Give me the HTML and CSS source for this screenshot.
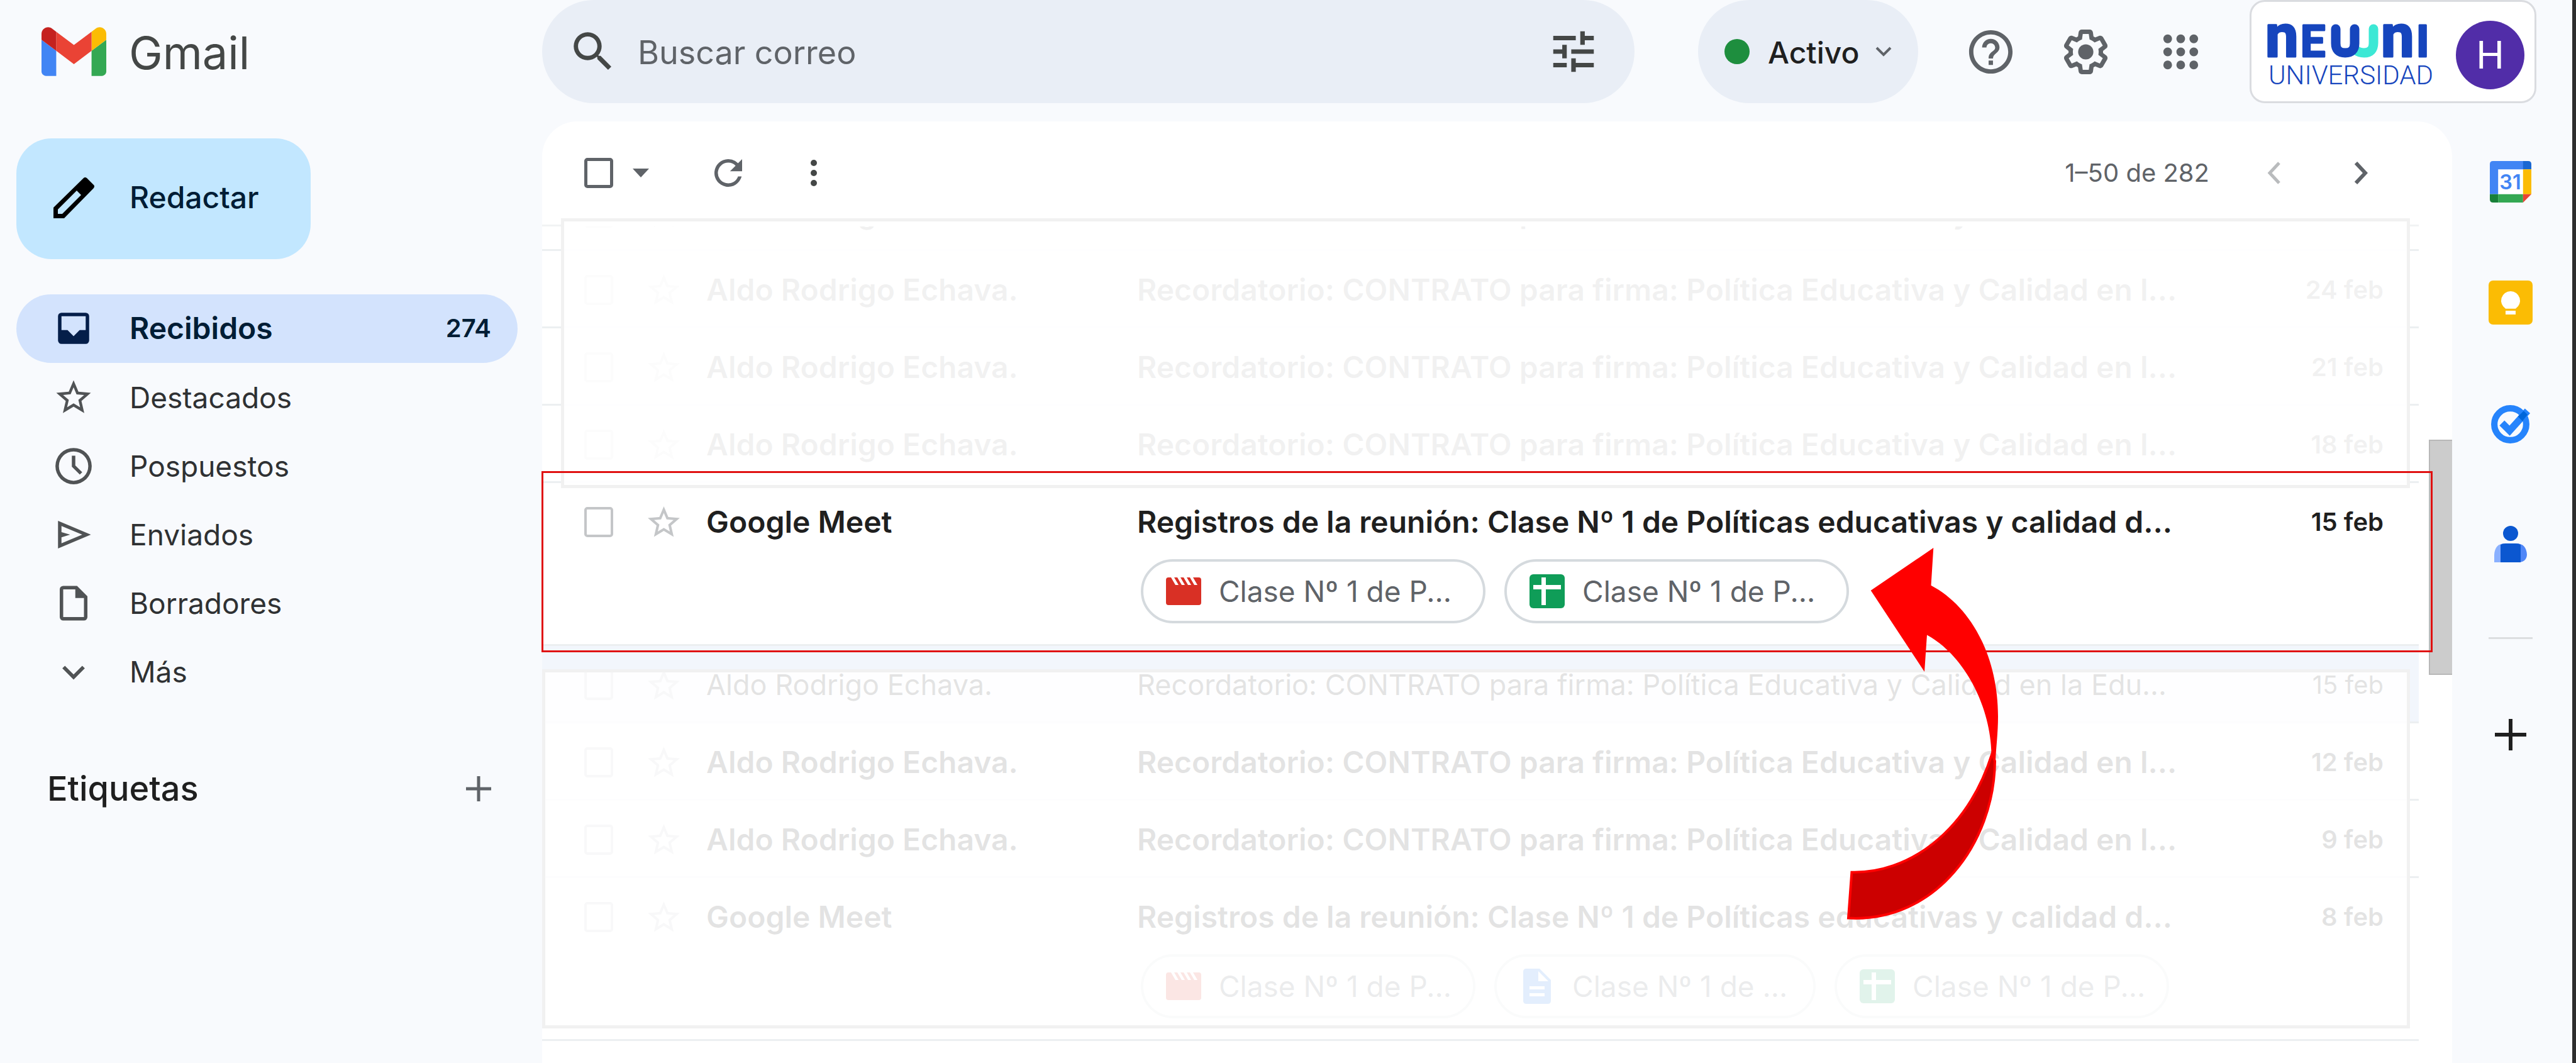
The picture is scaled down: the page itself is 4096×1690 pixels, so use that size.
FILE: index.html
```html
<!DOCTYPE html>
<html lang="es">
<head>
<meta charset="utf-8">
<title>Recibidos (274) - Gmail</title>
<link rel="stylesheet" href="styles.css">
</head>
<body>
<svg class="defs" aria-hidden="true">
  <symbol id="i-star" viewBox="0 0 24 24"><path d="M22 9.24l-7.19-.62L12 2 9.19 8.63 2 9.24l5.46 4.73L5.82 21 12 17.27 18.18 21l-1.63-7.03L22 9.24zM12 15.4l-3.76 2.27 1-4.28-3.32-2.88 4.38-.38L12 6.1l1.71 4.04 4.38.38-3.32 2.88 1 4.28L12 15.4z"/></symbol>
  <symbol id="i-clip" viewBox="0 0 56 44"><path fill="#d93025" d="M4 0h4l7 12h5L13 0h5l7 12h5L23 0h5l7 12h5L33 0h5l7 12h5L43 0h9q4 0 4 4v36q0 4-4 4H4q-4 0-4-4V4q0-4 4-4z"/></symbol>
  <symbol id="i-sheet" viewBox="0 0 56 54"><rect width="56" height="54" rx="6" fill="#0f9d58"/><path fill="#fff" d="M19 5h7v12h24v7H26v25h-7V24H6v-7h13z"/></symbol>
  <symbol id="i-doc" viewBox="0 0 44 56"><path fill="#1a73e8" d="M5 0h21l18 18v33q0 5-5 5H5q-5 0-5-5V5q0-5 5-5z"/><path fill="#fff" d="M24 4v16h16zM10 28h24v5H10zM10 39h24v5H10z"/></symbol>
</svg>

<header class="top">
  <a class="brand" href="#">
    <svg class="brand-logo" viewBox="52 42 88 66" aria-hidden="true"><path fill="#4285f4" d="M58 108h14V74L52 59v43c0 3.320 2.690 6 6 6"/><path fill="#34a853" d="M120 108h14c3.320 0 6-2.690 6-6V59l-20 15"/><path fill="#fbbc04" d="M120 48v26l20-15v-8c0-7.420-8.470-11.650-14.400-7.200"/><path fill="#ea4335" d="M72 74V48l24 18 24-18v26L96 92"/><path fill="#c5221f" d="M52 51v8l20 15V48l-5.600-4.200c-5.940-4.450-14.400-.22-14.400 7.200"/></svg>
    <span>Gmail</span>
  </a>
  <form class="search">
    <button type="button" class="ghost" aria-label="Buscar"><svg class="ico-search" viewBox="0 0 24 24"><path d="M15.500 14h-.79l-.28-.27A6.470 6.470 0 0 0 16 9.500 6.500 6.500 0 1 0 9.500 16c1.610 0 3.090-.59 4.230-1.570l.27.28v.79l5 4.990L20.490 19l-4.990-5zm-6 0C7.010 14 5 11.990 5 9.500S7.010 5 9.500 5 14 7.010 14 9.500 11.990 14 9.500 14z"/></svg></button>
    <input type="text" placeholder="Buscar correo" aria-label="Buscar correo">
    <button type="button" class="ghost" aria-label="Opciones de búsqueda"><svg class="ico-tune" viewBox="0 0 24 24"><path d="M3 17v2h6v-2H3zM3 5v2h10V5H3zm10 16v-2h8v-2h-8v-2h-2v6h2zM7 9v2H3v2h4v2h2V9H7zm14 4v-2H11v2h10zm-6-4h2V7h4V5h-4V3h-2v6z"/></svg></button>
  </form>
  <button type="button" class="status"><i class="dot"></i><span>Activo</span><svg class="ico-mini" viewBox="0 0 26 16"><path d="M2 2l11 11L24 2" fill="none" stroke="#5f6368" stroke-width="4"/></svg></button>
  <div class="tools">
    <button type="button" class="ghost" aria-label="Asistencia"><svg class="ico-tool" viewBox="0 0 24 24"><path d="M11 18h2v-2h-2v2zm1-16C6.480 2 2 6.480 2 12s4.480 10 10 10 10-4.480 10-10S17.520 2 12 2zm0 18c-4.410 0-8-3.590-8-8s3.590-8 8-8 8 3.590 8 8-3.590 8-8 8zm0-14c-2.210 0-4 1.790-4 4h2c0-1.100.9-2 2-2s2 .9 2 2c0 2-3 1.750-3 5h2c0-2.250 3-2.500 3-5 0-2.210-1.790-4-4-4z"/></svg></button>
    <button type="button" class="ghost" aria-label="Configuración"><svg class="ico-tool" viewBox="0 0 24 24"><path d="M13.850 22.250h-3.700c-.74 0-1.360-.54-1.450-1.270l-.27-1.890c-.27-.14-.53-.29-.79-.46l-1.800.72c-.7.26-1.470-.03-1.810-.65L2.200 15.530c-.35-.66-.2-1.440.36-1.880l1.530-1.190c-.01-.15-.02-.3-.02-.46 0-.15.01-.31.02-.46l-1.520-1.190c-.59-.45-.74-1.260-.37-1.880l1.850-3.190c.34-.62 1.110-.9 1.790-.63l1.810.73c.26-.17.52-.32.78-.46l.27-1.910c.09-.7.71-1.250 1.440-1.250h3.700c.74 0 1.360.54 1.450 1.270l.27 1.890c.27.14.53.29.79.46l1.800-.72c.71-.26 1.480.03 1.820.65l1.840 3.180c.36.66.2 1.440-.36 1.880l-1.520 1.190c.01.15.02.3.02.46s-.01.31-.02.46l1.520 1.190c.56.45.72 1.230.37 1.860l-1.860 3.220c-.34.62-1.110.9-1.800.63l-1.800-.72c-.26.17-.52.32-.78.46l-.27 1.910c-.1.680-.72 1.220-1.460 1.220zm-3.230-2h2.760l.37-2.550.53-.22c.44-.18.88-.44 1.340-.78l.45-.34 2.380.96 1.380-2.400-2.030-1.580.07-.56c.03-.26.06-.51.06-.78s-.03-.53-.06-.78l-.07-.56 2.030-1.580-1.390-2.400-2.390.96-.45-.35c-.42-.32-.87-.58-1.330-.77l-.52-.22-.37-2.550h-2.760l-.37 2.550-.53.21c-.44.19-.88.44-1.340.79l-.45.33-2.380-.95-1.390 2.390 2.030 1.580-.07.56a7 7 0 0 0-.06.79c0 .26.02.53.06.78l.07.56-2.030 1.580 1.380 2.400 2.390-.96.45.35c.43.33.86.58 1.330.77l.53.22.38 2.550z"/><circle cx="12" cy="12" r="3.500"/></svg></button>
    <button type="button" class="ghost" aria-label="Aplicaciones"><svg class="ico-tool" viewBox="0 0 24 24"><path d="M6 8a2 2 0 1 0 0-4 2 2 0 0 0 0 4zm6 12a2 2 0 1 0 0-4 2 2 0 0 0 0 4zm-6 0a2 2 0 1 0 0-4 2 2 0 0 0 0 4zm0-6a2 2 0 1 0 0-4 2 2 0 0 0 0 4zm6 0a2 2 0 1 0 0-4 2 2 0 0 0 0 4zm6-6a2 2 0 1 0 0-4 2 2 0 0 0 0 4zm-6 0a2 2 0 1 0 0-4 2 2 0 0 0 0 4zm6 6a2 2 0 1 0 0-4 2 2 0 0 0 0 4zm0 6a2 2 0 1 0 0-4 2 2 0 0 0 0 4z"/></svg></button>
  </div>
  <a class="account" href="#">
    <span class="org">
      <svg class="org-mark" viewBox="0 0 254 56" aria-hidden="true">
        <g class="org-text"><text x="-5" y="52" font-size="94">n</text><text x="51" y="52" font-size="70">E</text><text x="179" y="52" font-size="94">n</text><text x="235" y="52" font-size="70">I</text></g>
        <path d="M167 8v22q0 16-15 16-8 0-14-5" fill="none" stroke="#3ce8d5" stroke-width="15" stroke-linecap="round"/>
        <path d="M107 8v23q0 15 15 15t15-15V8" fill="none" stroke="#1645bd" stroke-width="15" stroke-linecap="round"/>
      </svg>
      <span class="org-name">UNIVERSIDAD</span>
    </span>
    <span class="avatar">H</span>
  </a>
</header>

<div class="layout">
<aside class="side">
  <button type="button" class="compose"><svg class="ico-pen" viewBox="0 0 65 65"><path fill="#000" fill-rule="evenodd" d="M0 65V48L48 1q2-2 5 0l11 11q2 2 0 5L17 65zM7 58h7l30-30-7-7L7 51z"/></svg><span>Redactar</span></button>
  <nav class="nav">
    <a class="on" href="#"><svg viewBox="0 0 24 24"><path fill="#041e49" d="M19 3H5a2 2 0 0 0-2 2v14a2 2 0 0 0 2 2h14a2 2 0 0 0 2-2V5a2 2 0 0 0-2-2zm0 10h-3.500L12 16.500 8.500 13H5V5h14z"/></svg><span>Recibidos</span><b>274</b></a>
    <a href="#"><svg viewBox="0 0 24 24"><use href="#i-star"/></svg><span>Destacados</span></a>
    <a href="#"><svg viewBox="0 0 24 24"><path d="M12 1.500a10.500 10.500 0 1 0 0 21 10.500 10.500 0 0 0 0-21zm0 19a8.500 8.500 0 1 1 0-17 8.500 8.500 0 0 1 0 17zM11 6h2v5.600l4 3.900-1.400 1.400-4.600-4.500z"/></svg><span>Pospuestos</span></a>
    <a href="#"><svg viewBox="0 0 24 24"><path d="M3 4v16l19-8zm2 3l12 5-12 5v-3.500l5-1.500-5-1.500z"/></svg><span>Enviados</span></a>
    <a href="#"><svg viewBox="0 0 24 24"><path d="M14 2H6a2 2 0 0 0-2 2v16a2 2 0 0 0 2 2h12a2 2 0 0 0 2-2V8l-6-6zM6 20V4h7v5h5v11H6z"/></svg><span>Borradores</span></a>
    <a href="#"><svg viewBox="0 0 24 24"><path d="M7 8.500l5 5 5-5 1.500 1.500-6.500 6.500L5.500 10z"/></svg><span>Más</span></a>
  </nav>
  <div class="labels"><h2>Etiquetas</h2><button type="button" class="ghost" aria-label="Crear etiqueta"><svg class="ico-plus" viewBox="0 0 40 40"><path d="M17.500 0h5v17.500H40v5H22.500V40h-5V22.500H0v-5h17.500z"/></svg></button></div>
</aside>

<main class="panel">
  <div class="bar">
    <input type="checkbox" class="box dark" aria-label="Seleccionar todo">
    <button type="button" class="ghost caret" aria-label="Opciones de selección"><svg class="ico-caret" viewBox="0 0 26 14"><path d="M0 0h26L13 14z"/></svg></button>
    <button type="button" class="ghost reload" aria-label="Actualizar"><svg class="ico-reload" viewBox="4 4 16 16"><path d="M17.650 6.350A7.960 7.960 0 0 0 12 4a8 8 0 1 0 7.730 10h-2.080A6 6 0 1 1 12 6c1.660 0 3.140.69 4.220 1.780L13 11h7V4z"/></svg></button>
    <button type="button" class="ghost more" aria-label="Más opciones"><svg class="ico-more" viewBox="0 0 12 44"><circle cx="6" cy="6" r="5"/><circle cx="6" cy="22" r="5"/><circle cx="6" cy="38" r="5"/></svg></button>
    <span class="count">1–50 de 282</span>
    <button type="button" class="ghost" aria-label="Más recientes"><svg class="ico-page" viewBox="0 0 22 36"><path d="M19 2L4 18l15 16" fill="none" stroke="#b9bbbd" stroke-width="5"/></svg></button>
    <button type="button" class="ghost next" aria-label="Anteriores"><svg class="ico-page" viewBox="0 0 22 36"><path d="M3 2l15 16L3 34" fill="none" stroke="#5f6368" stroke-width="6"/></svg></button>
  </div>

  <div class="list">
    <ul class="rows">
      <li><div class="mail"><input type="checkbox" class="box" aria-label="Seleccionar"><svg class="star"><use href="#i-star"/></svg><span class="from">Aldo Rodrigo Echava.</span><span class="subject">Recordatorio: CONTRATO para firma: Política Educativa y Calidad en l...</span><time>25 feb</time></div></li>
      <li><div class="mail"><input type="checkbox" class="box" aria-label="Seleccionar"><svg class="star"><use href="#i-star"/></svg><span class="from">Aldo Rodrigo Echava.</span><span class="subject">Recordatorio: CONTRATO para firma: Política Educativa y Calidad en l...</span><time>24 feb</time></div></li>
      <li><div class="mail"><input type="checkbox" class="box" aria-label="Seleccionar"><svg class="star"><use href="#i-star"/></svg><span class="from">Aldo Rodrigo Echava.</span><span class="subject">Recordatorio: CONTRATO para firma: Política Educativa y Calidad en l...</span><time>21 feb</time></div></li>
      <li><div class="mail"><input type="checkbox" class="box" aria-label="Seleccionar"><svg class="star"><use href="#i-star"/></svg><span class="from">Aldo Rodrigo Echava.</span><span class="subject">Recordatorio: CONTRATO para firma: Política Educativa y Calidad en l...</span><time>18 feb</time></div></li>
      <li><div class="mail"><input type="checkbox" class="box" aria-label="Seleccionar"><svg class="star"><use href="#i-star"/></svg><span class="from">Google Meet</span><span class="subject">Registros de la reunión: Clase Nº 1 de Políticas educativas y calidad d...</span><time>15 feb</time></div>
        <div class="chips"><a href="#"><svg class="f-clip"><use href="#i-clip"/></svg>Clase Nº 1 de P...</a><a href="#"><svg class="f-sheet"><use href="#i-sheet"/></svg>Clase Nº 1 de P...</a></div></li>
      <li class="read"><div class="mail"><input type="checkbox" class="box" aria-label="Seleccionar"><svg class="star"><use href="#i-star"/></svg><span class="from">Aldo Rodrigo Echava.</span><span class="subject">Recordatorio: CONTRATO para firma: Política Educativa y Calidad en la Edu...</span><time>15 feb</time></div></li>
      <li><div class="mail"><input type="checkbox" class="box" aria-label="Seleccionar"><svg class="star"><use href="#i-star"/></svg><span class="from">Aldo Rodrigo Echava.</span><span class="subject">Recordatorio: CONTRATO para firma: Política Educativa y Calidad en l...</span><time>12 feb</time></div></li>
      <li><div class="mail"><input type="checkbox" class="box" aria-label="Seleccionar"><svg class="star"><use href="#i-star"/></svg><span class="from">Aldo Rodrigo Echava.</span><span class="subject">Recordatorio: CONTRATO para firma: Política Educativa y Calidad en l...</span><time>9 feb</time></div></li>
      <li><div class="mail"><input type="checkbox" class="box" aria-label="Seleccionar"><svg class="star"><use href="#i-star"/></svg><span class="from">Google Meet</span><span class="subject">Registros de la reunión: Clase Nº 1 de Políticas educativas y calidad d...</span><time>8 feb</time></div>
        <div class="chips tight"><a href="#"><svg class="f-clip"><use href="#i-clip"/></svg>Clase Nº 1 de P...</a><a href="#"><svg class="f-doc"><use href="#i-doc"/></svg>Clase Nº 1 de ...</a><a href="#"><svg class="f-sheet"><use href="#i-sheet"/></svg>Clase Nº 1 de P...</a></div></li>
    </ul>
    <div class="track"><div class="thumb"></div></div>
  </div>

  <div class="veil veil-top"></div>
  <div class="veil veil-bottom"></div>
  <div class="focus"></div>
  <svg class="arrow" viewBox="-2 -2 245 597" aria-hidden="true">
    <path fill="#f00" d="M37.700 67.700L137.300 0l-3.800 59.800C195 92 240 170 240 268c0 27-3 47-4 71l-6.400-12C228 250 185 170 127 138.500L123 197z"/>
    <path fill="#c00" stroke="#f00" stroke-width="4" d="M2 588.600L7.400 515.700C95 518 190 455 230.600 327l4.400 12C234 470 140 596 2 588.600z"/>
  </svg>
</main>

<aside class="rail">
  <a href="#" aria-label="Calendar"><svg class="r-icon" viewBox="0 0 65 65"><path fill="#fff" d="M12 12h41v41H12z"/><path fill="#4285f4" d="M5 0h48v13H13v39H0V5q0-5 5-5z"/><path fill="#1967d2" d="M52 0h8q5 0 5 5v8H52z"/><path fill="#fbbc04" d="M52 13h13v39H52z"/><path fill="#34a853" d="M13 52h39v13H13z"/><path fill="#188038" d="M0 52h13v13H5q-5 0-5-5z"/><path fill="#ea4335" d="M52 52h13L52 65z"/><text x="32" y="44" font-size="32" text-anchor="middle" fill="#4285f4">31</text></svg></a>
  <a href="#" aria-label="Keep"><svg class="r-icon wide" viewBox="0 0 70 70"><rect width="70" height="70" rx="7" fill="#fbbc04"/><path fill="#fff" d="M35 17a15 15 0 0 0-8 27.700h16A15 15 0 0 0 35 17zM27 48h16v6H27z"/></svg></a>
  <a href="#" aria-label="Tasks"><svg class="r-icon" viewBox="0 0 65 65"><circle cx="32" cy="34" r="25" fill="none" stroke="#2684fc" stroke-width="10"/><path d="M19 32l12 12 28-31" fill="none" stroke="#2684fc" stroke-width="11"/><path d="M44 22l9-9 6 6-8 10z" fill="#0066da"/></svg></a>
  <a href="#" aria-label="Contactos"><svg class="r-icon small" viewBox="0 0 52 58"><circle cx="26" cy="12" r="12" fill="#0b57d0"/><path fill="#8ab0ff" d="M0 58V46q1-18 17-18h7v30z"/><path fill="#4f86f7" d="M28 28h7q16 0 17 18-1 12-14 12H28z"/><path fill="#0b57d0" d="M10 30q3-2 8-2h16q5 0 8 2v28H10z"/></svg></a>
  <hr>
  <button type="button" class="ghost" aria-label="Obtener complementos"><svg class="r-icon add" viewBox="0 0 50 50"><path fill="#1f1f1f" d="M22 0h6v22h22v6H28v22h-6V28H0v-6h22z"/></svg></button>
</aside>
</div>
</body>
</html>
```
FILE: styles.css
```css
* { box-sizing: border-box; }
body {
  margin: 0;
  min-height: 100vh;
  display: flex;
  flex-direction: column;
  background: #f8fafd;
  border-right: 6px solid #2e2e2e;
  color: #1f1f1f;
  font-family: Inter, "Liberation Sans", sans-serif;
  font-size: 48px;
  line-height: 60px;
}
a { color: inherit; text-decoration: none; }
svg { display: block; fill: #5f6368; flex: none; }
button, input { font: inherit; color: inherit; margin: 0; }
.defs { display: none; }
.ghost { border: 0; padding: 0; background: none; display: block; }

/* Header */
.top { display: flex; align-items: center; height: 164px; padding-right: 57px; margin-bottom: 29px; }
.brand { width: 862px; padding-left: 66px; display: flex; align-items: center; gap: 36px; font-size: 72px; color: #444746; }
.brand-logo { width: 103px; height: 78px; }
.brand span, .search input, .status span { padding-top: 4px; }
.search { flex: 1; height: 164px; border-radius: 82px; background: #e9eef6; display: flex; align-items: center; padding: 0 54px 0 40px; }
.search input { flex: 1; min-width: 0; border: 0; background: none; outline: 0; padding-left: 0; padding-right: 0; padding-bottom: 0; margin-left: 30px; font-size: 52px; color: #5f6368; }
.search input::placeholder { color: #5f6368; opacity: 1; }
.ico-search { width: 82px; height: 82px; fill: #444746; }
.ico-tune { width: 86px; height: 86px; fill: #444746; }
.status { width: 350px; height: 164px; margin-left: 101px; border: 0; border-radius: 82px; background: #e9eef6; display: flex; align-items: center; padding: 0 42px; font-weight: 500; }
.dot { width: 40px; height: 40px; border-radius: 50%; background: #1e8e3e; margin-right: 29px; }
.ico-mini { width: 26px; height: 16px; margin-left: auto; }
.tools { display: flex; gap: 68px; margin: 0 68px 0 74px; }
.ico-tool { width: 83px; height: 83px; }
.account { width: 456px; height: 164px; border: 3px solid #dadce0; border-radius: 24px; background: #fff; display: flex; align-items: center; justify-content: space-between; padding: 10px 16px 0 27px; }
.org { display: flex; flex-direction: column; gap: 2px; padding-top: 8px; color: #1645bd; }
.org-mark { width: 254px; height: 56px; overflow: visible; }
.org-text { fill: #1645bd; stroke: #1645bd; stroke-width: 3px; stroke-linejoin: round; font-family: Roboto, sans-serif; font-weight: 700; }
.org-name { font: 300 42px/48px Roboto, sans-serif; }
.avatar { width: 109px; height: 109px; border-radius: 50%; background: #512da8; color: #fff; font-size: 60px; line-height: 109px; text-align: center; }

.layout { flex: 1; display: grid; grid-template-columns: 862px minmax(0, 1fr) 191px; }

/* Sidebar */
.side { padding: 27px 39px 0 26px; }
.compose { width: 468px; height: 192px; border: 0; border-radius: 56px; background: #c2e7ff; color: #001d35; display: flex; align-items: center; gap: 56px; padding: 0 0 4px 59px; font-weight: 500; }
.ico-pen { width: 65px; height: 65px; }
.nav { margin-top: 56px; display: flex; flex-direction: column; font-size: 46px; }
.nav a { height: 109px; border-radius: 55px; display: flex; align-items: center; gap: 56px; padding: 0 42px 0 58px; color: #2f3133; }
.nav svg { width: 66px; height: 66px; fill: #505355; }
.nav .on { background: #d3e3fd; color: #001d35; font-size: 48px; font-weight: 600; padding-bottom: 2px; }
.nav b { margin-left: auto; font-size: 40px; font-weight: 600; }
.labels { margin-top: 102px; height: 60px; display: flex; align-items: center; justify-content: space-between; padding: 0 42px 0 49px; }
.labels h2 { margin: 0; font-size: 54px; font-weight: 500; }
.ico-plus { width: 40px; height: 40px; }

/* Message panel */
.panel { position: relative; background: #fff; border-radius: 56px 56px 0 0; }
.bar { height: 164px; display: flex; align-items: center; padding: 0 134px 0 67px; }
.box { appearance: none; width: 46px; height: 48px; border: 4px solid #c4c6c8; border-radius: 5px; background: none; }
.box.dark { border: 5px solid #5f6368; }
.caret { margin-left: 31px; }
.reload { margin-left: 104px; }
.more { margin-left: 108px; }
.ico-caret { width: 26px; height: 14px; }
.ico-reload { width: 44px; height: 44px; }
.ico-more { width: 12px; height: 44px; fill: #444746; }
.ico-page { width: 22px; height: 36px; }
.count { margin: 0 92px 0 auto; font-size: 40px; color: #5f6368; }
.next { margin-left: 116px; }

.list { display: flex; gap: 16px; }
.rows { flex: 1; min-width: 0; margin: 0; padding: 0; list-style: none; overflow: hidden; border-top: 3px solid #f1f3f4; }
.rows li { border-bottom: 3px solid #eceff1; font-weight: 600; }
.rows li:first-child { margin-top: -84px; }
.rows .read { background: #f2f6fc; font-weight: 400; font-size: 45px; }
.mail { height: 120px; display: grid; grid-template-columns: 96px 100px 685px minmax(0, 1fr) auto; align-items: center; padding: 4px 56px 0 67px; white-space: nowrap; }
.star { width: 61px; height: 61px; fill: #c4c6c8; }
.from, .subject { margin-left: -2px; }
.mail time { font-size: 40px; }
.chips { display: flex; gap: 30px; padding: 1px 0 33px 952px; font-size: 46px; font-weight: 400; color: #5f6368; white-space: nowrap; }
.chips a { height: 102px; border: 4px solid #d5dade; border-radius: 51px; display: flex; align-items: center; gap: 28px; padding: 0 50px 0 36px; }
.chips.tight a { min-width: 511px; padding-right: 34px; }
.f-clip { width: 56px; height: 44px; }
.f-sheet { width: 56px; height: 54px; }
.f-doc { width: 56px; height: 56px; }
.track { width: 37px; padding-top: 342px; }
.thumb { height: 374px; background: #ccc; border: 2px solid #b8b8b8; border-right: 0; }

/* Annotations drawn over the message list */
.veil { position: absolute; right: 67px; border: 5px solid #f1f1f1; }
.veil-top { left: 30px; top: 154px; height: 429px; background: rgba(255, 255, 255, .94); }
.veil-bottom { left: 0; top: 871px; height: 571px; background: rgba(255, 255, 255, .88); }
.focus { position: absolute; left: -1px; right: 31px; top: 556px; height: 288px; border: 3px solid #e01010; }
.arrow { position: absolute; right: 719px; top: 676px; width: 245px; height: 597px; }

/* Add-on rail */
.rail { display: flex; flex-direction: column; align-items: center; padding-right: 5px; }
.rail a { height: 192px; display: flex; align-items: center; }
.r-icon { width: 66px; height: 66px; }
.r-icon.wide { width: 70px; height: 70px; }
.r-icon.small { width: 52px; height: 58px; }
.r-icon.add { width: 50px; height: 50px; }
.r-icon text { font-weight: 600; }
.rail hr { width: 70px; height: 3px; border: 0; background: #dcdee0; margin: 52px 0 127px; }
```
